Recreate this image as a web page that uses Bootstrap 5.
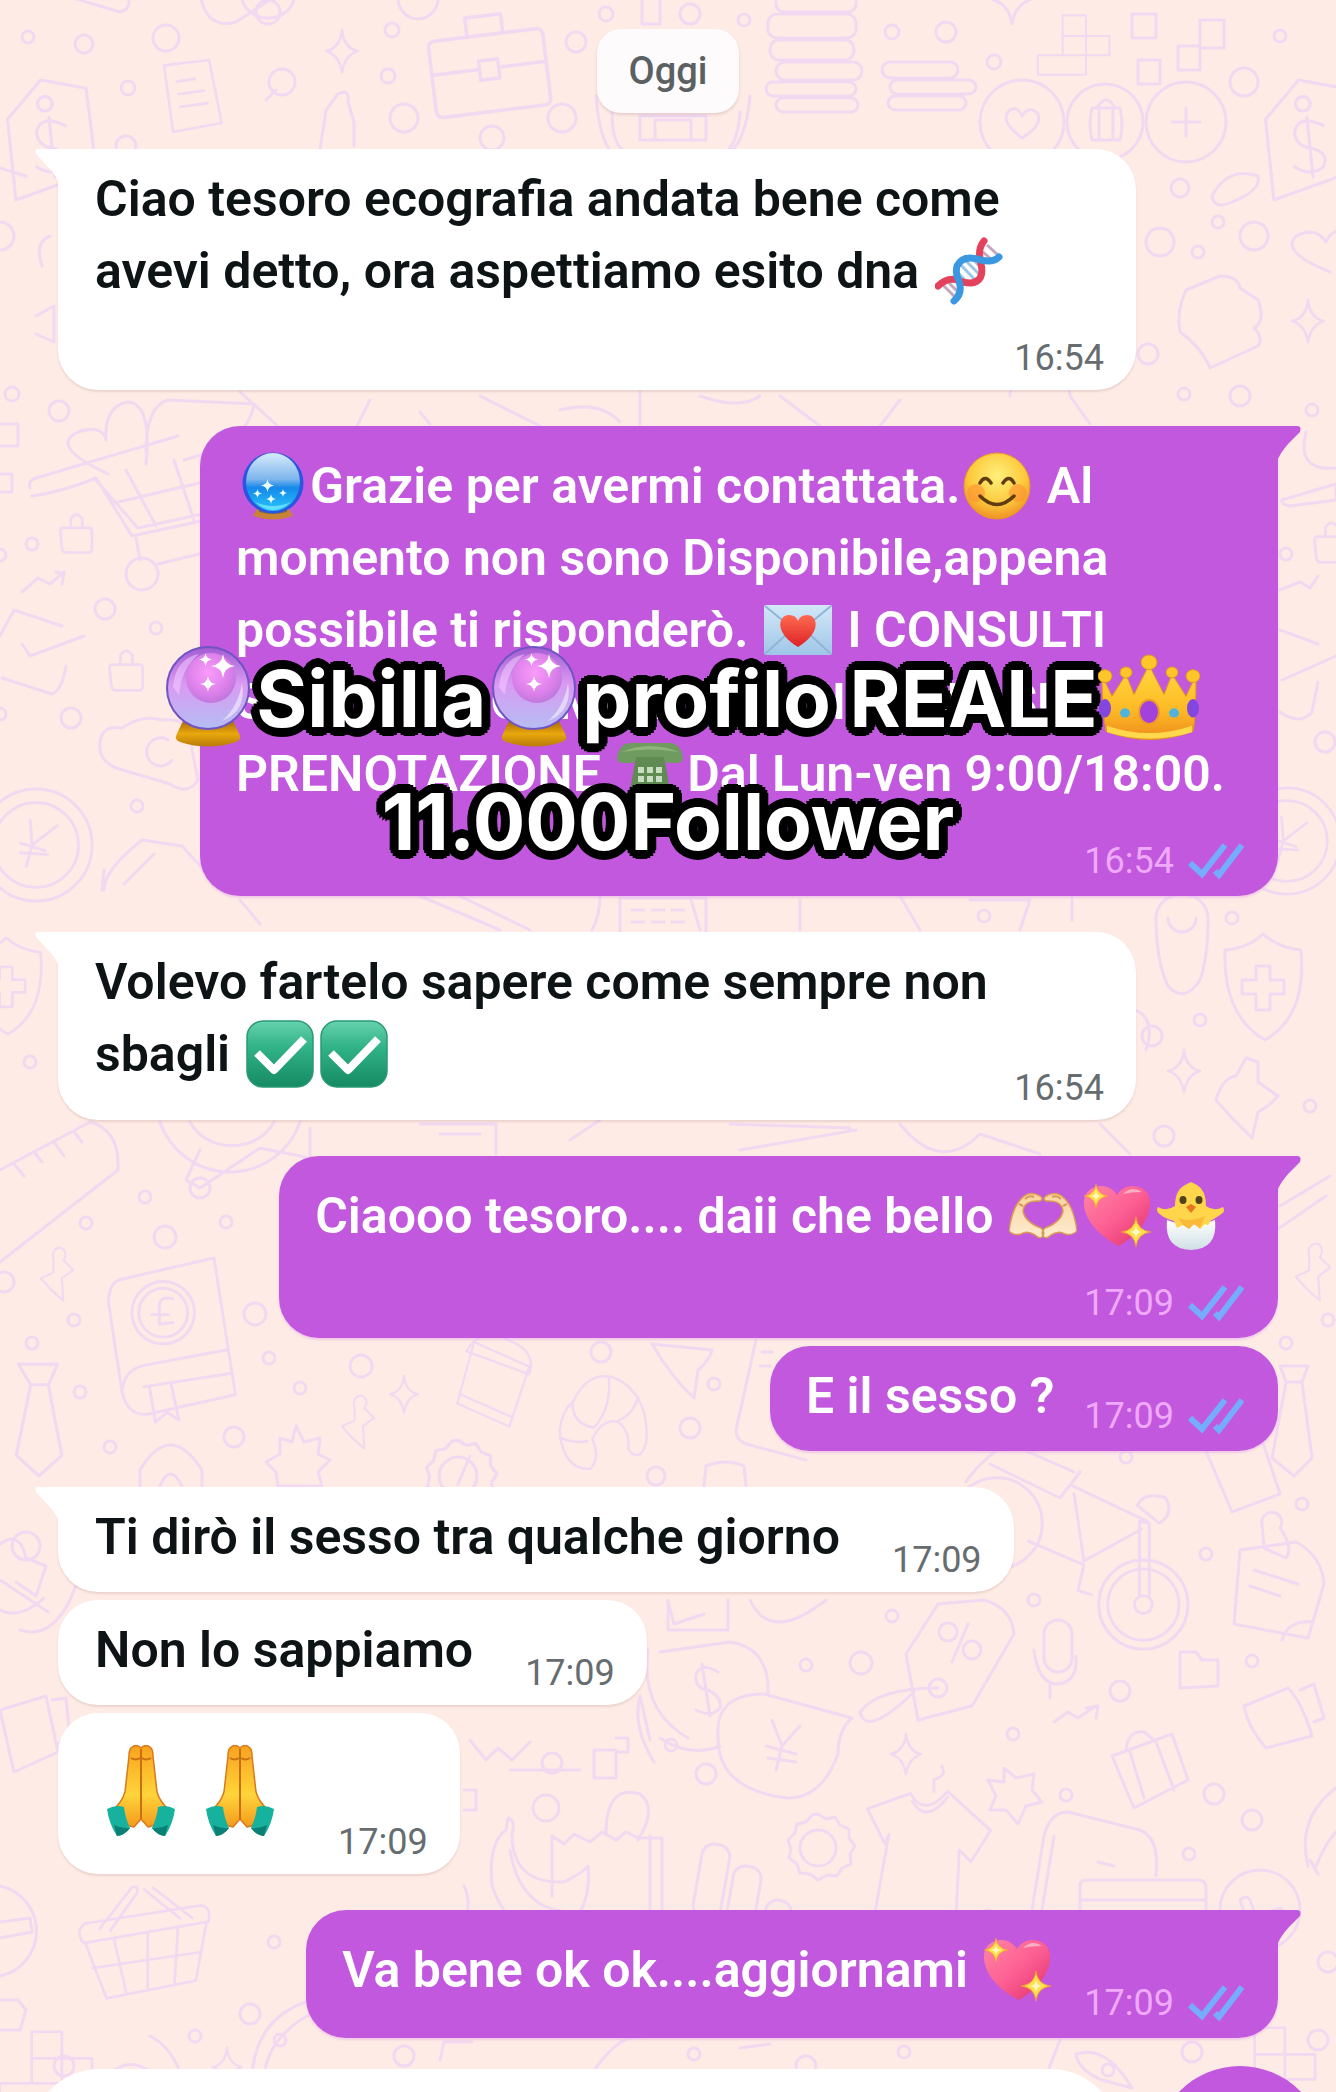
<!DOCTYPE html>
<html lang="it">
<head>
<meta charset="utf-8">
<meta name="viewport" content="width=device-width, initial-scale=1">
<title>Chat</title>
<link href="https://cdn.jsdelivr.net/npm/bootstrap@5.3.0/dist/css/bootstrap.min.css" rel="stylesheet">
<style>
  body { font-family: Roboto, "Liberation Sans", sans-serif; background: #feebe5; }
  .chat-screen { height: 100vh; background: #feebe5; }
  .wallpaper { inset: 0; width: 100%; height: 100%; fill: none; stroke: #f2d9f1; stroke-width: 3; stroke-linejoin: round; stroke-linecap: round; }
  .chat-log { padding: 29px 58px 31px; }
  .day-pill { background: #fdfbfc; color: #5b6063; font-size: 38px; font-weight: 500; line-height: 44px; padding: 20px 32px; border-radius: 24px; margin-bottom: 36px; box-shadow: 0 2px 3px rgba(120,80,100,.18); }
  .msg-row { margin-bottom: 8px; }
  .msg-row.last-of-group { margin-bottom: 36px; }
  .bubble { border-radius: 40px; padding: 14px 32px 10px 37px; font-size: 50px; line-height: 72px; font-weight: 600; white-space: nowrap; }
  .bubble-in { background: #fff; color: #0e1316; box-shadow: 0 2px 2px rgba(140,90,90,.16); column-gap: 52px; }
  .bubble-out { background: #c158dd; color: #fff; box-shadow: 0 2px 2px rgba(230,170,240,.5); column-gap: 30px; padding: 14px 34px 13px 36px; }
  .bubble-wide { width: 1078px; max-width: 100%; column-gap: 0; }
  .bubble-tall { padding-top: 24px; }
  .bubble-stack { row-gap: 29px; }
  .msg-text { padding-bottom: 9px; }
  .bubble-out .msg-text { padding-bottom: 6px; }
  .bubble-stack .msg-text { padding-bottom: 0; }
  .single-line .msg-text { padding-bottom: 19px; }
  .two-lines .msg-text { padding-bottom: 20px; }
  .tailed-in { border-top-left-radius: 0; }
  .tailed-out { border-top-right-radius: 0; }
  .tail { top: 0; width: 24px; height: 36px; }
  .tailed-in .tail { right: 100%; margin-right: -1px; fill: #fff; }
  .tailed-out .tail { left: 100%; margin-left: -1px; fill: #c158dd; }
  .stamp { font-size: 36px; line-height: 44px; font-weight: 400; color: #666c6f; gap: 14px; }
  .bubble-out .stamp { color: #efa9fb; }
  .ticks { width: 56px; height: 36px; fill: none; stroke: #76adfb; stroke-width: 6; }
  .emo { width: 68px; height: 68px; margin: 0 3px; vertical-align: -17px; }
  .emo-big { width: 92px; height: 92px; margin-right: 7px; }
  .big-line { padding: 18px 0 27px; }
  .caption {
    top: 211px; left: 0; z-index: 2; font-family: Inter, "Liberation Sans", sans-serif; font-weight: 700; font-size: 78px; line-height: 123px; color: #fff; white-space: nowrap;
    text-shadow: 9px 0 #000, -9px 0 #000, 0 9px #000, 0 -9px #000, 6px 6px #000, -6px 6px #000, 6px -6px #000, -6px -6px #000, 8px 3px #000, -8px 3px #000, 8px -3px #000, -8px -3px #000, 3px 8px #000, -3px 8px #000, 3px -8px #000, -3px -8px #000, 4px 0 #000, -4px 0 #000, 0 4px #000, 0 -4px #000;
  }
  .cap-emo { width: 102px; height: 102px; vertical-align: -20px; }
  .cap-orb { width: 84px; margin: 0 6px; }
  .composer { padding: 0 11px 0 30px; gap: 35px; }
  .composer-field { height: 140px; border-radius: 80px; background: #fff; font-size: 50px; padding: 0 60px; }
  .mic-btn { width: 170px; height: 170px; background: #c158dd; margin-top: -3px; }
</style>
<script src="https://cdn.jsdelivr.net/npm/bootstrap@5.3.0/dist/js/bootstrap.bundle.min.js"></script>
</head>
<body>

<!-- shared emoji drawings -->
<svg width="0" height="0" class="position-absolute" aria-hidden="true">
  <defs>
    <linearGradient id="gBlue" x1="0" y1="0" x2="0" y2="1"><stop offset="0" stop-color="#d8ebfb"/><stop offset=".45" stop-color="#7db5ec"/><stop offset=".6" stop-color="#1688ea"/><stop offset="1" stop-color="#27c5fb"/></linearGradient>
    <linearGradient id="gGold" x1="0" y1="0" x2="0" y2="1"><stop offset="0" stop-color="#a86a08"/><stop offset=".5" stop-color="#e9a80c"/><stop offset="1" stop-color="#b87a08"/></linearGradient>
    <linearGradient id="gOrb" x1="0" y1="0" x2="0" y2="1"><stop offset="0" stop-color="#a35cd2"/><stop offset=".45" stop-color="#d99af2"/><stop offset="1" stop-color="#b5bdf3"/></linearGradient>
    <radialGradient id="gOrbIn" cx=".45" cy=".4" r=".6"><stop offset="0" stop-color="#fa9bfb"/><stop offset=".7" stop-color="#dc80ea"/><stop offset="1" stop-color="#c078dc"/></radialGradient>
    <radialGradient id="gFace" cx=".5" cy=".35" r=".65"><stop offset="0" stop-color="#fff07c"/><stop offset=".65" stop-color="#fcc93b"/><stop offset="1" stop-color="#f09226"/></radialGradient>
    <linearGradient id="gEnv" x1="0" y1="0" x2="0" y2="1"><stop offset="0" stop-color="#d3e8f7"/><stop offset="1" stop-color="#9fc6e8"/></linearGradient>
    <linearGradient id="gRed" x1="0" y1="0" x2="0" y2="1"><stop offset="0" stop-color="#ff6a50"/><stop offset="1" stop-color="#dc2326"/></linearGradient>
    <linearGradient id="gPink" x1="0" y1="0" x2="1" y2="1"><stop offset="0" stop-color="#ff86a6"/><stop offset=".5" stop-color="#fd5f93"/><stop offset="1" stop-color="#dd2f6c"/></linearGradient>
    <linearGradient id="gCheck" x1="0" y1="0" x2="0" y2="1"><stop offset="0" stop-color="#66d2ac"/><stop offset=".4" stop-color="#31b287"/><stop offset="1" stop-color="#158a63"/></linearGradient>
    <linearGradient id="gHand" x1="0" y1="0" x2="0" y2="1"><stop offset="0" stop-color="#f9a21f"/><stop offset=".6" stop-color="#ffd43a"/><stop offset="1" stop-color="#f39a1d"/></linearGradient>
    <linearGradient id="gCrown" x1="0" y1="0" x2="0" y2="1"><stop offset="0" stop-color="#ffd83e"/><stop offset=".6" stop-color="#fdba25"/><stop offset="1" stop-color="#ee8b1c"/></linearGradient>
    <linearGradient id="gSkin" x1="0" y1="0" x2="0" y2="1"><stop offset="0" stop-color="#f9d49f"/><stop offset="1" stop-color="#fdebd0"/></linearGradient>
    <linearGradient id="gEgg" x1="0" y1="0" x2="0" y2="1"><stop offset="0" stop-color="#fff"/><stop offset="1" stop-color="#cfdfe5"/></linearGradient>

    <symbol id="e-star" viewBox="0 0 20 20"><path d="M10 0Q11 9 20 10Q11 11 10 20Q9 11 0 10Q9 9 10 0Z"/></symbol>
    <symbol id="e-ball" viewBox="0 0 68 68">
      <path d="M18 57h32l4 7q-20 7-40 0Z" fill="#c98336"/><path d="M20 57h28v3q-14 4-28 0Z" fill="#7f6a3e"/>
      <circle cx="34" cy="31" r="30.500" fill="#2a55e0"/><ellipse cx="34" cy="30" rx="27" ry="29" fill="url(#gBlue)"/>
      <g fill="#e8ffff"><use href="#e-star" x="22" y="27" width="13" height="13"/><use href="#e-star" x="14" y="37" width="9" height="9"/><use href="#e-star" x="27" y="42" width="10" height="10"/><use href="#e-star" x="40" y="37" width="8" height="8"/></g>
      <path d="M16 50q18 16 36 0q-18 8-36 0Z" fill="#7df0ff" opacity=".7"/>
    </symbol>
    <symbol id="e-orb" viewBox="9 0 84 102">
      <path d="M26 76h50q4 8 7 15q1 4-4 6q-28 9-56 0q-5-2-4-6Q22 84 26 76Z" fill="url(#gGold)"/>
      <circle cx="51" cy="43" r="41" fill="url(#gOrb)" stroke="#7054c4" stroke-width="2"/>
      <circle cx="54" cy="33" r="25" fill="url(#gOrbIn)"/>
      <path d="M16 42Q18 14 42 9Q24 24 22 50Z" fill="#f5ccff" opacity=".55"/><path d="M85 38q5 28-20 38q16-14 20-38Z" fill="#fff" opacity=".5"/>
      <g fill="#fff"><use href="#e-star" x="54" y="9" width="24" height="24"/><use href="#e-star" x="42" y="8" width="13" height="13"/><use href="#e-star" x="43" y="31" width="16" height="16"/></g>
    </symbol>
    <symbol id="e-smile" viewBox="0 0 68 68">
      <circle cx="34" cy="34" r="33" fill="url(#gFace)" stroke="#e79a22"/><circle cx="13" cy="41" r="9" fill="#ff8b32" opacity=".55"/><circle cx="55" cy="41" r="9" fill="#ff8b32" opacity=".55"/>
      <g fill="none" stroke="#5f3c12" stroke-width="3.500" stroke-linecap="round"><path d="M17 31q5-9 11 0M40 31q6-9 11 0M17 44q17 17 34 0"/></g>
    </symbol>
    <symbol id="e-letter" viewBox="0 0 68 68">
      <rect y="9" width="68" height="50" rx="2" fill="url(#gEnv)"/><path d="M1 10l33 27L67 10M1 58l24-22M67 58L43 36" fill="none" stroke="#8fb6d8" stroke-width="2"/>
      <path d="M34 51C10 37 14 19 25 19q7 0 9 6q2-6 9-6c11 0 15 18-9 32Z" fill="url(#gRed)"/>
    </symbol>
    <symbol id="e-phone" viewBox="0 0 68 68">
      <path d="M20 16h28l8 46H12Z" fill="#5f8a52"/><path d="M1 18Q3 4 14 3h40q11 1 13 15q0 5-7 5h-7q-5 0-5-6H20q0 6-5 6H8q-7 0-7-5Z" fill="#6f9a60"/><path d="M5 12Q34 0 63 12Q34 7 5 12Z" fill="#8fb47c"/>
      <g fill="#c7dec0"><path d="M22 27h6v6h-6zM31 27h6v6h-6zM40 27h6v6h-6zM22 36h6v6h-6zM31 36h6v6h-6zM40 36h6v6h-6zM22 45h6v6h-6zM31 45h6v6h-6zM40 45h6v6h-6z"/></g>
    </symbol>
    <symbol id="e-hands" viewBox="0 0 68 68">
      <path d="M0 49Q3 26 12 17Q20 8 31 14q4 3 0 5Q15 18 14 29q2 11 18 17q5 4 1 9q-3 2-7-2q-8-5-14-1Q5 54 0 49ZM68 49Q65 26 56 17Q48 8 37 14q-4 3 0 5Q53 18 54 29q-2 11-18 17q-5 4-1 9q3 2 7-2q8-5 14-1q7 2 12-3Z" fill="url(#gSkin)" stroke="#d99a55" stroke-width="1.500"/>
      <path d="M16 17q4-4 9-2M52 17q-4-4-9-2M10 22l4 2M58 22l-4 2" stroke="#d99a55" stroke-width="2" fill="none"/>
    </symbol>
    <symbol id="e-heart" viewBox="0 0 68 68">
      <path d="M36 64C12 52 0 34 1 19C2 3 25-2 34 13C43-2 66 3 67 19C68 36 56 52 36 64Z" fill="url(#gPink)"/><path d="M40 12q9-9 19-2q-11 0-19 2Z" fill="#ffc0d0" opacity=".8"/>
      <g fill="#ffe04a" stroke="#f29a35" stroke-width=".6"><use href="#e-star" x="1" y="2" width="24" height="24"/><use href="#e-star" x="38" y="34" width="30" height="32"/></g>
      <g fill="#fff9c8"><use href="#e-star" x="8" y="9" width="10" height="10"/><use href="#e-star" x="47" y="44" width="12" height="12"/></g>
    </symbol>
    <symbol id="e-chick" viewBox="0 0 68 68">
      <path d="M10 38q24 9 48 0q3 29-24 30Q7 67 10 38Z" fill="url(#gEgg)"/>
      <path d="M34 0q4 2 6 3q9 5 9 21q8 6 17 1q3 5-3 8q-6 4-10 6q-1 6-5 3l-5 5l-6-5l-5 5l-6-4l-6 3l-3-7Q7 36 4 33q-6-4-3-8q8 5 17-1Q18 8 28 3Z" fill="#ffd64b"/>
      <path d="M21 36q12 5 27-2l-5 12l-6-4l-5 5l-6-4Z" fill="#f6a62b" opacity=".6"/>
      <ellipse cx="26" cy="18" rx="3.500" ry="4" fill="#51421d"/><ellipse cx="42" cy="18" rx="3.500" ry="4" fill="#51421d"/><path d="M29 25l5-3l5 3l-5 6Z" fill="#e97520"/>
    </symbol>
    <symbol id="e-check" viewBox="0 0 68 68">
      <rect x="1" y="1" width="66" height="66" rx="16" fill="url(#gCheck)" stroke="#299a75" stroke-width="1.500"/><path d="M11 33L28 50L58 19" fill="none" stroke="#fff" stroke-width="8" stroke-linejoin="round"/>
    </symbol>
    <symbol id="e-dna" viewBox="0 0 68 68">
      <g stroke-width="3"><path d="M52 8l11 10M48 15l10 9M8 48l12 12M14 46l8 8" stroke="#c7a7bd"/><path d="M24 26l20 21M30 23l16 16M21 34l14 14M38 22l9 10" stroke="#9cc6e8"/></g>
      <g fill="none" stroke-width="7" stroke-linecap="round"><path d="M49 4Q42 12 46 27Q50 44 36 46Q28 46 23 43Q12 40 3 49" stroke="#e4425c"/><path d="M64 20Q58 26 46 23Q28 17 22 29Q20 37 24 44Q28 56 19 64" stroke="#3a98e2"/></g>
    </symbol>
    <symbol id="e-pray" viewBox="0 0 92 92">
      <path d="M36 3q5-5 10 0q5-5 10 0q2 2 2 8l4 36q3 10 12 18q-8 15-21 17l-7-8l-7 8q-13-2-21-17q9-8 12-18l4-36q0-6 2-8Z" fill="url(#gHand)" stroke="#d9791a" stroke-width="1.500"/>
      <path d="M46 4v70M36 13q5 3 9 0M47 13q4 3 9 0" stroke="#c96f14" stroke-width="2" fill="none"/>
      <path d="M12 64q9-5 17-2q1 10 6 21q-5 7-13 8Q14 79 12 64ZM80 64q-9-5-17-2q-1 10-6 21q5 7 13 8q8-12 10-27Z" fill="#17b29d"/><path d="M19 80q8 4 16 3q-5 7-13 8ZM73 80q-8 4-16 3q5 7 13 8Z" fill="#0c7f74"/>
    </symbol>
    <symbol id="e-crown" viewBox="0 0 102 102"><g transform="translate(0 9) scale(1 .92)">
      <path d="M4 23L14 46L28 22L36 44L51 12L66 44L74 22L88 46L98 23Q98 70 95 84Q51 102 8 84Q4 60 4 23Z" fill="url(#gCrown)" stroke="#e29420"/>
      <path d="M9 78q42 16 85 0v7q-42 14-85 0Z" fill="#ffd84b"/>
      <g fill="#fcc62b" stroke="#de951d"><circle cx="7" cy="24" r="7"/><circle cx="28" cy="20" r="6"/><circle cx="51" cy="9" r="8"/><circle cx="74" cy="20" r="6"/><circle cx="95" cy="24" r="7"/></g>
      <ellipse cx="51" cy="63" rx="10" ry="13" fill="#a441dc" stroke="#ef9a28" stroke-width="2"/><ellipse cx="7" cy="59" rx="6" ry="10" fill="#8346df"/><ellipse cx="95" cy="59" rx="6" ry="10" fill="#8346df"/>
      <circle cx="27" cy="64" r="5" fill="#4fb3dc"/><circle cx="76" cy="64" r="5" fill="#4fb3dc"/></g>
    </symbol>

    <symbol id="tail-l" viewBox="0 0 24 36"><path d="M3 0H24V36Q22 26 11 16L1 5Q-1 0 3 0Z"/></symbol>
    <symbol id="tail-r" viewBox="0 0 24 36"><path d="M20 0H0V36Q2 28 12 17L23 6Q25 0 20 0Z"/></symbol>
    <symbol id="ticks" viewBox="0 0 56 36"><path d="M2 20L14 31L37 2M27 28L31 32L54 2"/></symbol>

    <!-- wallpaper doodles -->
    <symbol id="w-spark" viewBox="0 0 40 50" overflow="visible"><path d="M20 0Q22 20 38 24Q23 29 20 48Q17 29 2 24Q18 20 20 0Z"/></symbol>
    <symbol id="w-lock" viewBox="0 0 40 50" overflow="visible"><path d="M4 18h30q3 0 3 4v20q0 4-4 4H8q-4 0-5-4L1 22q0-4 3-4ZM13 18V8q6-10 13 0v10"/></symbol>
    <symbol id="w-bag" viewBox="0 0 100 90" overflow="visible"><path d="M8 24h84q6 0 6 6v52q0 6-6 6H8q-6 0-6-6V30q0-6 6-6ZM35 24V8h30v16M2 52h40M58 52h40M42 45h16v16H42Z"/></symbol>
    <symbol id="w-tag" viewBox="0 0 90 120" overflow="visible"><path d="M2 40L34 2L78 10L88 90L10 118ZM38 18a7 7 0 1 0 .1 0M58 46q-26-12-28 8q2 12 16 14q18 4 12 18q-12 10-28 0M42 38l6 58"/></symbol>
    <symbol id="w-doc" viewBox="0 0 70 80" overflow="visible"><path d="M4 6L54 0L68 70L14 80ZM18 24l20-3M20 38l28-4M22 52l30-4"/></symbol>
    <symbol id="w-shield" viewBox="0 0 80 110" overflow="visible"><path d="M40 2Q56 16 78 18Q84 84 42 108Q0 84 2 18Q26 16 40 2ZM33 34h14v14h14v14H47v16H33V62H19V48h14Z"/></symbol>
    <symbol id="w-coin" viewBox="0 0 120 120" overflow="visible"><circle cx="60" cy="60" r="58"/><circle cx="60" cy="60" r="44"/><path d="M54 34l2 26l26-20M56 60l-6 22M44 58l26 8M44 68l28 2"/></symbol>
    <symbol id="w-cart" viewBox="0 0 190 200" overflow="visible"><path d="M2 32Q0 24 8 22L150-20M4 40q30-4 64-18L104 80l120-26M66 22L110 72l110-24M98 14l30 56M146 4l20 60M90 46l120-28M108 82l4 22M130 108l90-22"/><circle cx="114" cy="118" r="16"/><path d="M80 18Q20-10 50-24q24-8 28 8Q76-50 100-54q24 2 18 62M118-4Q118-50 140-56l86 4q-6 40-70 56"/></symbol>
    <symbol id="w-book" viewBox="0 0 130 170" overflow="visible"><path d="M12 22L108 0L130 140L40 160Q20 162 14 138L0 46Q0 26 12 22ZM14 138Q14 116 36 110L122 94M36 132L126 118M42 132l6 36l12-10l12 8l-8-38"/><circle cx="56" cy="56" r="32"/><circle cx="56" cy="56" r="25"/><path d="M66 42q-14-4-14 8v18l14-2M44 58h18"/></symbol>
    <symbol id="w-tie" viewBox="0 0 44 110" overflow="visible"><path d="M2 2h38l-9 20H14ZM14 22L0 90l22 20l22-20L31 22"/></symbol>
    <symbol id="w-basket" viewBox="0 0 150 130" overflow="visible"><path d="M8 42L136 22q14 0 10 18L6 64Q-4 50 8 42ZM8 64l24 62l100-20l12-66M40 58l14 62M78 52v64M112 46l-4 64M16 92l122-18M24 48L60 2q8-4 6 6L36 50M74 4l40 32M84 2l44 34"/></symbol>
    <symbol id="w-shirt" viewBox="0 0 130 170" overflow="visible"><path d="M2 44L46 28Q60 54 84 26L128 66L108 98L96 86L92 168Q60 172 10 148L24 70L20 80ZM70 26V14q14-4 8-14M48 36q14 24 36-4"/></symbol>
    <symbol id="w-bike" viewBox="0 0 200 220" overflow="visible"><circle cx="170" cy="160" r="45"/><circle cx="170" cy="160" r="36"/><circle cx="22" cy="78" r="46"/><circle cx="170" cy="160" r="9"/><path d="M166 152V76l10 2v74M98 40l76 36M100 48l10 68L168 84M54 96l56 24M110 120l-6 26l14 4M164 60q6-14 28-8q10 16-6 26Z"/></symbol>
    <symbol id="w-croissant" viewBox="0 0 110 120" overflow="visible"><path d="M18 34Q40-10 76 8Q112 30 108 84q-8 26-22 8q2-24-14-34q-20-2-30 22q10 22-2 36Q6 118 2 70Q4 46 18 34Q16 60 44 66Q66 40 62 4M72 58q20-8 26-30M2 78q20 8 34 4"/></symbol>
    <symbol id="w-gear" viewBox="0 0 80 80" overflow="visible"><path d="M40 4l8 5l9-2l5 8l9 4v9l6 8l-5 8l1 10l-9 4l-5 8l-10-1l-9 5l-8-6l-10-1l-3-9l-8-6l2-9l-3-9l7-7l2-9l9-2l6-7Z"/><circle cx="40" cy="38" r="18"/></symbol>
    <symbol id="w-cross" viewBox="0 0 110 90" overflow="visible"><path d="M40 2h34v30h34v28H74v28H4V60h36ZM40 32h34v28H40Z"/></symbol>
    <symbol id="w-cup" viewBox="0 0 100 120" overflow="visible"><path d="M24 8L96 40L70 118L2 88ZM14 20Q34-14 70 6Q106 20 96 50ZM6 76l68 30"/></symbol>
    <symbol id="w-pin" viewBox="0 0 50 80" overflow="visible"><path d="M20 20q-4-16 10-18q12 6 4 18l14 14l-16 12l2 32L16 62L2 46l18-8Z"/></symbol>
  </defs>
</svg>

<main class="chat-screen position-relative overflow-hidden d-flex flex-column">
  <svg class="wallpaper position-absolute" viewBox="0 0 1336 2092" preserveAspectRatio="xMidYMin slice" aria-hidden="true">
    <use href="#w-tag" x="2" y="78" width="100" height="124"/><use href="#w-doc" x="156" y="60" width="72" height="72"/>
    <use href="#w-bag" x="428" y="6" width="120" height="108" transform="rotate(-7 488 60)"/>
    <path d="M200-6Q206 30 236 22l52-34M242-4a26 22 0 1 0 52 0M400-10a20 20 0 1 0 36 0M60-6L120 12Q134 8 126-8M266 100l10-10M320 150l6-40l12-16q12-6 10 8l6 20v24"/><circle cx="282" cy="82" r="13"/><circle cx="268" cy="12" r="12"/>
    <use href="#w-spark" x="322" y="30" width="40" height="44"/><use href="#w-spark" x="992" y="-24" width="40" height="50"/>
    <g><rect x="776" y="-14" width="80" height="26" rx="8"/><rect x="768" y="14" width="88" height="24" rx="9"/><rect x="770" y="40" width="84" height="20" rx="9"/><rect x="776" y="62" width="86" height="18" rx="9"/><rect x="766" y="82" width="90" height="14" rx="7"/><rect x="776" y="98" width="82" height="14" rx="7"/><rect x="882" y="62" width="76" height="16" rx="8"/><rect x="890" y="80" width="86" height="14" rx="7"/><rect x="888" y="96" width="78" height="14" rx="7"/></g>
    <path d="M596 96Q600 150 620 160M750 96q-4 44-20 56M612 112q0 34 14 40h100q12-10 14-40M640 116h66v24h-66ZM655 120h36v20h-36ZM642-10v34h18V-10"/>
    <circle cx="1022" cy="122" r="42"/><circle cx="1105" cy="122" r="38"/><circle cx="1186" cy="122" r="40"/><path d="M1022 138q-24-18-12-28q8-4 12 6q8-12 16-2q4 12-16 24M1092 108h28q4 18 0 32h-28q-4-16 0-32ZM1099 108v30M1113 108v30M1098 106q8-12 16 0M1186 108v28M1172 122h28"/>
    <use href="#w-cross" x="1026" y="14" width="94" height="62"/><rect x="1132" y="14" width="24" height="24"/><path d="M1200 20h24v28h-24v22h-22V46h22ZM1138 60h22v24h-22Z"/>
    <use href="#w-tag" x="1260" y="78" width="100" height="124"/><path d="M1258 176q-30-10-46 20q2 14 20 6q30-12 26-26"/>
    <path d="M1186 290l34-14q18 0 20 12l18 12q8 20-4 28q10 10 4 18l-48 22q-8-20-30-36q-4-20 6-42Z"/><use href="#w-spark" x="1288" y="300" width="40" height="44"/>
    <path d="M1330 272q-50-20-34-36q20-10 30 6q6-14 20-10M50 236q-16 6-8 30M0 168l26 8M36 316l18-10v36l-18-8"/>
    <use href="#w-cart" x="28" y="456" width="190" height="200"/><use href="#w-lock" x="58" y="512" width="38" height="44"/><use href="#w-lock" x="108" y="648" width="38" height="46"/>
    <path d="M0 424h18v22H0M0 474h12v18H0M22 592l16-14l12 6l14-12M56 572l8 2l-2 10M0 636l14-26l48 16M22 644l8 12l54-20M2 678l50 16q10-4 14-28M100 750q-2-26 22-22q20-14 40-8q30-4 30 30l6 30q-10 16-28 4l-54-16q-14-6-16-18M168 740a14 14 0 1 0 4 20M104 890q0-20 38-50l40 6l40 44M124 884l30-30M104 870l-2 20"/>
    <use href="#w-coin" x="-22" y="786" width="116" height="118"/>
    <path d="M240 392l40 36M370 400l-14 28M480 396l60 30M560 410q40-10 60 12M780 396l40 30M900 400l-20 26M1010 396a30 30 0 0 1 60 0l20 28M420 412l10 12M640 392v34M700 396q40 14 60 0"/>
    <path d="M1306 432q-10 40 30 36M1282 500l54-16v16l-46 6q-10-2-8-6M1280 590l20-8l10 6l8-12M1280 630l38 14M1282 680l54-24M1280 712q20 14 32 0l6-30"/><use href="#w-lock" x="1312" y="520" width="40" height="46"/>
    <use href="#w-coin" x="1232" y="786" width="110" height="110"/>
    <path d="M420 896l80 34M460 896l70 34M600 896q0 20-8 34M690 896l10 34M800 900v30M900 896l20 34M970 900h60l-10 30M1072 896v24M240 900l20 24"/><rect x="620" y="898" width="86" height="40"/><path d="M632 910h12M652 910h12M672 910h12M632 922h12M652 922h12M672 922h12"/>
    <use href="#w-shield" x="-34" y="936" width="80" height="100"/><use href="#w-shield" x="1218" y="932" width="90" height="110"/>
    <path d="M1156 918a26 24 0 1 1 52 0q0 40-8 62q-16 24-32 6Q1156 960 1156 918ZM1168 918a14 14 0 1 0 28 0M1136 1010q20 10 10 40"/>
    <use href="#w-spark" x="1166" y="1050" width="36" height="44"/><path d="M1216 1100q6-22 20-24l10-18l12 4v20l20 14q-8 10-20 16l-6 26l-20-20Z"/>
    <path d="M0 1170L90 1122Q120 1130 118 1170L0 1262M14 1164l10 12M34 1152l8 10M54 1142l10 14M74 1132l8 10M160 1122a74 74 0 0 0 140 0M190 1122a46 40 0 0 0 84 0M200 1150l-14 30l14 8l60-40l50 10v-30M420 1124h76v30M440 1134h40M570 1140l30-20M730 1124l120 4M740 1150l116-20M900 1124q40 50 80 10l60 20M1100 1124l30 30"/><circle cx="200" cy="1188" r="10"/>
    <use href="#w-pin" x="34" y="1246" width="46" height="56"/><use href="#w-book" x="102" y="1258" width="140" height="166"/><use href="#w-tie" x="16" y="1362" width="46" height="114"/>
    <use href="#w-cup" x="444" y="1336" width="100" height="92"/><use href="#w-croissant" x="548" y="1374" width="110" height="98"/><use href="#w-pin" x="334" y="1394" width="48" height="56"/><use href="#w-spark" x="386" y="1376" width="36" height="38"/>
    <path d="M652 1344l60 6q-2 10-14 20l-4 28q-22-20-42-54ZM756 1340l-20 90q0 10 10 14l60 16M762 1352h10M760 1366h10"/>
    <path d="M140 1486v-16q30-50 62 0v16M160 1486q10-24 22 0M296 1426l8 16l16-4l-2 16l12 6l-12 12l4 14h-44l-2-14l-10-10l14-8v-16l12 4ZM704 1486l2-20q20-8 38 0l2 20"/><use href="#w-gear" x="416" y="1436" width="84" height="84"/><path d="M470 1456l-12 28"/>
    <path d="M1262 1240l64-44M1280 1206l50-30M1280 1366h28l-6 16h-16ZM1286 1382l-14 76l22 18l18-18l-10-76M966 1482q8-14 40-40l68 30M1204 1446l54-18l22 66l-48 18Z"/><use href="#w-pin" x="1290" y="1242" width="46" height="60"/>
    <use href="#w-bike" x="974" y="1446" width="200" height="218"/>
    <path d="M990 1464l70 34l20-26M1240 1550l56-8q26 14 28 42l-16 54l-74-14ZM1254 1570l44 14M1250 1586l30 10M1282 1640q6-20 30-18M1262 1524a10 10 0 1 1 18 4q14 20 6 30l-22-10Z"/>
    <path d="M0 1544q20-14 26 14l20 8l-10 30l-20-14M0 1580l48 32M0 1610q20 10 44-12M20 1630q30 10 50-30l10-24M0 1710l46-14l12 56l-44 20ZM52 1700l14-2l4 40l-12 6"/><circle cx="26" cy="1546" r="14"/>
    <path d="M660 1652l70-10q40 6 38 52M660 1738q30 20 60 8M718 1738q-4-44 46-44l88 24q-14 12-14 36q-16 44-50 44q-70-8-70-60ZM772 1720l10 26l18-20M782 1746l-6 24M766 1746l30 8M768 1758l28 4M718 1672q-16-10-22 2q-2 14 12 16q14 6 12 18q-8 10-24 2M702 1664l8 52M668 1600v30h60v-30M750 1600q20 44 76 0M648 1650q-8 60 40 88"/>
    <path d="M938 1604l-32 50l12 66l54-14l42-72q-2-26-30-34ZM968 1624l-16 38M938 1688q-60 0-78 24q6 26 54-20"/><circle cx="948" cy="1632" r="9"/><circle cx="972" cy="1650" r="9"/><circle cx="938" cy="1688" r="9"/>
    <rect x="1044" y="1620" width="28" height="52" rx="14"/><path d="M1034 1650q4 34 24 34q20-2 18-28M1050 1684v14M1180 1652h16l6 8h16v26l-38 2ZM1054 1722l14-10l10 6l18-12M1086 1708l12-2l-2 12"/>
    <path d="M1112 1756l60-22l16 46l-54 28ZM1126 1750q2-20 18-18l10 8M1130 1752l14 46M1156 1742l18 48M1244 1706l44-18q14 14 24 48l-46 12q-18-20-22-42ZM1300 1690l14-6l10 34l-10 4"/>
    <use href="#w-spark" x="886" y="1734" width="40" height="42"/><path d="M1004 1768l12 10l18-4l-2 16l10 12l-16 4l-8 18l-12-14h-16l6-14l-8-16l16 2Z"/>
    <use href="#w-shirt" x="864" y="1766" width="130" height="166"/><use href="#w-gear" x="778" y="1810" width="80" height="80"/>
    <g><rect x="698" y="1844" width="28" height="74" rx="12" transform="rotate(10 712 1878)"/><rect x="730" y="1866" width="28" height="62" rx="12" transform="rotate(10 744 1896)"/><rect x="764" y="1900" width="26" height="44" rx="12" transform="rotate(10 776 1920)"/></g>
    <path d="M1032 1910l12-74q6-24 24-24l72 18q20 8 16 46M1042 1910l12-74M1098 1862l16 4M1080 1912v-26q0-6 6-6h112q8 0 8 8v24M1080 1900h126"/><circle cx="1260" cy="1910" r="40"/><path d="M1240 1900q6-6 10 0l6 16l24-8q8 4 4 12l-34 10Z"/><path d="M1336 1788q-40 30-28 78M1316 1866q10-24 20-34M1310 1860l8 14"/>
    <path d="M552 1836v60M552 1836l12 8l10-10l16 8l12-10l14 8l10-8l12 6h24v110M650 1836v110M606 1834q0-50 34-40q18 14-2 46M510 1770h70M470 1740l16 20l12-12l14 12l18-18M464 1790h12v20h-12M594 1750h22v28h-22ZM616 1738h12v14h-12M492 1886q-4-44 14-56l2-12q8 2 4 16q0 50 52 48q20-10 24-16q4 40-22 64q-50 20-74-44ZM510 1850q10 60 60 62M410 1920q10 30 50 10q14-24 4-44M430 1940l6-20M650 1740l-10-44q-8 30 14 66M668 1602l6 22l30-10"/>
    <path d="M0 1886a46 46 0 0 1 0 90M0 1922l30-4l2 14l-32 6M0 2000h18l8 10l-6 20H0"/>
    <use href="#w-basket" x="70" y="1886" width="150" height="116"/><use href="#w-spark" x="208" y="2048" width="38" height="40"/><use href="#w-cross" x="-10" y="2030" width="110" height="80"/>
    <path d="M252 2076q4-60 60-76M264 2076q4-40 50-64M150 2036q20 10 30 36M108 2076q20-22 46-2M440 2060l4-18h28M590 2076q30-44 50-38M740 2048l30-4M1060 2040l-14 36M1076 2054q30-10 56 34l-30-8q-24-10-26-26Z"/><circle cx="1108" cy="2070" r="6"/><use href="#w-cross" x="1218" y="2026" width="100" height="80"/>
    <g>
      <circle cx="84" cy="44" r="9"/><circle cx="166" cy="38" r="13"/><circle cx="28" cy="37" r="6"/><circle cx="392" cy="30" r="7"/><circle cx="388" cy="76" r="7"/><circle cx="404" cy="118" r="14"/><circle cx="562" cy="118" r="14"/><circle cx="576" cy="42" r="10"/><circle cx="606" cy="14" r="7"/><circle cx="690" cy="14" r="10"/><circle cx="744" cy="20" r="6"/><circle cx="892" cy="32" r="7"/><circle cx="946" cy="32" r="10"/><circle cx="1280" cy="36" r="6"/><circle cx="1244" cy="82" r="14"/><circle cx="994" cy="62" r="7"/><circle cx="128" cy="88" r="7"/><circle cx="126" cy="146" r="10"/><circle cx="492" cy="138" r="12"/><circle cx="1180" cy="188" r="9"/><circle cx="1160" cy="242" r="14"/><circle cx="1218" cy="222" r="6"/><circle cx="1254" cy="236" r="14"/><circle cx="1198" cy="252" r="6"/><circle cx="1148" cy="354" r="10"/><circle cx="1184" cy="394" r="6"/><circle cx="1240" cy="396" r="10"/><circle cx="1312" cy="410" r="6"/><circle cx="0" cy="236" r="14"/>
      <circle cx="12" cy="394" r="7"/><circle cx="59" cy="411" r="10"/><circle cx="32" cy="544" r="6"/><circle cx="105" cy="609" r="10"/><circle cx="156" cy="628" r="6"/><circle cx="0" cy="555" r="6"/><circle cx="71" cy="718" r="10"/><circle cx="0" cy="714" r="6"/><circle cx="137" cy="806" r="6"/><circle cx="1286" cy="554" r="6"/><circle cx="1325" cy="742" r="10"/>
      <circle cx="984" cy="916" r="6"/><circle cx="1232" cy="918" r="6"/><circle cx="1152" cy="1036" r="10"/><circle cx="1200" cy="1020" r="6"/><circle cx="1310" cy="1106" r="6"/><circle cx="1164" cy="1136" r="10"/><circle cx="30" cy="1062" r="6"/><circle cx="145" cy="1197" r="6"/><circle cx="86" cy="1223" r="6"/><circle cx="165" cy="1237" r="11"/><circle cx="226" cy="1222" r="6"/><circle cx="4" cy="1282" r="10"/><circle cx="74" cy="1320" r="6"/><circle cx="32" cy="1343" r="6"/><circle cx="255" cy="1314" r="11"/><circle cx="269" cy="1358" r="6"/><circle cx="80" cy="1392" r="6"/><circle cx="361" cy="1366" r="11"/><circle cx="300" cy="1388" r="6"/><circle cx="234" cy="1437" r="10"/><circle cx="110" cy="1447" r="6"/><circle cx="601" cy="1352" r="10"/><circle cx="714" cy="1384" r="6"/><circle cx="690" cy="1428" r="10"/><circle cx="656" cy="1476" r="9"/><circle cx="1286" cy="1343" r="6"/><circle cx="1328" cy="1320" r="6"/><circle cx="1126" cy="1457" r="6"/>
      <circle cx="1302" cy="1504" r="6"/><circle cx="1206" cy="1554" r="6"/><circle cx="1034" cy="1600" r="6"/><circle cx="892" cy="1616" r="6"/><circle cx="806" cy="1665" r="6"/><circle cx="861" cy="1663" r="11"/><circle cx="1120" cy="1691" r="10"/><circle cx="1252" cy="1661" r="6"/><circle cx="1013" cy="1734" r="6"/><circle cx="671" cy="1745" r="6"/><circle cx="706" cy="1774" r="10"/><circle cx="1066" cy="1795" r="6"/><circle cx="1214" cy="1794" r="10"/><circle cx="1252" cy="1820" r="10"/><circle cx="1189" cy="1854" r="6"/><circle cx="988" cy="1916" r="6"/><circle cx="552" cy="1763" r="10"/><circle cx="546" cy="1808" r="13"/><circle cx="274" cy="1942" r="6"/><circle cx="370" cy="1948" r="9"/><circle cx="250" cy="2014" r="10"/><circle cx="280" cy="2040" r="6"/><circle cx="64" cy="2066" r="10"/><circle cx="114" cy="2083" r="6"/><circle cx="195" cy="2036" r="6"/><circle cx="404" cy="2056" r="10"/><circle cx="694" cy="2054" r="6"/><circle cx="904" cy="2052" r="6"/><circle cx="1192" cy="2052" r="10"/><circle cx="1318" cy="2040" r="10"/><circle cx="1328" cy="1962" r="10"/><circle cx="806" cy="2066" r="10"/>
    </g>
  </svg>

  <section class="chat-log position-relative d-flex flex-column">
    <div class="day-pill align-self-center">Oggi</div>

    <div class="msg-row last-of-group d-flex justify-content-start">
      <article class="bubble bubble-in bubble-wide bubble-stack tailed-in position-relative d-flex flex-column">
        <svg class="tail position-absolute" aria-hidden="true"><use href="#tail-l"/></svg>
        <div class="msg-text">Ciao tesoro ecografia andata bene come<br>avevi detto, ora aspettiamo esito dna <svg class="emo" role="img" aria-label="DNA"><use href="#e-dna"/></svg></div>
        <div class="stamp align-self-end"><time>16:54</time></div>
      </article>
    </div>

    <div class="msg-row last-of-group d-flex justify-content-end position-relative">
      <article class="bubble bubble-out bubble-wide bubble-tall bubble-stack tailed-out position-relative d-flex flex-column">
        <svg class="tail position-absolute" aria-hidden="true"><use href="#tail-r"/></svg>
        <div class="msg-text"><svg class="emo" role="img" aria-label="Sfera di cristallo"><use href="#e-ball"/></svg>Grazie per avermi contattata.<svg class="emo" role="img" aria-label="Sorriso"><use href="#e-smile"/></svg> Al<br>momento non sono Disponibile,appena<br>possibile ti risponderò. <svg class="emo" role="img" aria-label="Lettera d'amore"><use href="#e-letter"/></svg> I CONSULTI<br>SONO A PAGAMENTO E INIZIANO SU<br>PRENOTAZIONE <svg class="emo" role="img" aria-label="Telefono"><use href="#e-phone"/></svg>Dal Lun-ven 9:00/18:00.</div>
        <div class="stamp align-self-end d-flex align-items-center"><time>16:54</time><svg class="ticks" role="img" aria-label="Letto"><use href="#ticks"/></svg></div>
      </article>
      <div class="caption position-absolute w-100 text-center">
        <div class="ps-4"><svg class="cap-emo cap-orb" role="img" aria-label="Sfera"><use href="#e-orb"/></svg>Sibilla<svg class="cap-emo cap-orb" role="img" aria-label="Sfera"><use href="#e-orb"/></svg>profilo REALE<svg class="cap-emo" role="img" aria-label="Corona"><use href="#e-crown"/></svg></div>
        <div>11.000Follower</div>
      </div>
    </div>

    <div class="msg-row last-of-group d-flex justify-content-start">
      <article class="bubble bubble-in bubble-wide two-lines tailed-in position-relative d-flex justify-content-between">
        <svg class="tail position-absolute" aria-hidden="true"><use href="#tail-l"/></svg>
        <div class="msg-text">Volevo fartelo sapere come sempre non<br>sbagli <svg class="emo" role="img" aria-label="Fatto"><use href="#e-check"/></svg><svg class="emo" role="img" aria-label="Fatto"><use href="#e-check"/></svg></div>
        <div class="stamp align-self-end"><time>16:54</time></div>
      </article>
    </div>

    <div class="msg-row d-flex justify-content-end">
      <article class="bubble bubble-out bubble-tall bubble-stack tailed-out position-relative d-flex flex-column">
        <svg class="tail position-absolute" aria-hidden="true"><use href="#tail-r"/></svg>
        <div class="msg-text pe-3">Ciaooo tesoro.... daii che bello <svg class="emo" role="img" aria-label="Mani a cuore"><use href="#e-hands"/></svg><svg class="emo" role="img" aria-label="Cuore scintillante"><use href="#e-heart"/></svg><svg class="emo" role="img" aria-label="Pulcino"><use href="#e-chick"/></svg></div>
        <div class="stamp align-self-end d-flex align-items-center"><time>17:09</time><svg class="ticks" role="img" aria-label="Letto"><use href="#ticks"/></svg></div>
      </article>
    </div>

    <div class="msg-row last-of-group d-flex justify-content-end">
      <article class="bubble bubble-out d-flex">
        <div class="msg-text">E il sesso ?</div>
        <div class="stamp align-self-end d-flex align-items-center"><time>17:09</time><svg class="ticks" role="img" aria-label="Letto"><use href="#ticks"/></svg></div>
      </article>
    </div>

    <div class="msg-row d-flex justify-content-start">
      <article class="bubble bubble-in tailed-in position-relative d-flex">
        <svg class="tail position-absolute" aria-hidden="true"><use href="#tail-l"/></svg>
        <div class="msg-text">Ti dirò il sesso tra qualche giorno</div>
        <div class="stamp align-self-end"><time>17:09</time></div>
      </article>
    </div>

    <div class="msg-row d-flex justify-content-start">
      <article class="bubble bubble-in d-flex">
        <div class="msg-text">Non lo sappiamo</div>
        <div class="stamp align-self-end"><time>17:09</time></div>
      </article>
    </div>

    <div class="msg-row last-of-group d-flex justify-content-start">
      <article class="bubble bubble-in d-flex">
        <div class="big-line d-flex"><svg class="emo-big" role="img" aria-label="Mani giunte"><use href="#e-pray"/></svg><svg class="emo-big me-0" role="img" aria-label="Mani giunte"><use href="#e-pray"/></svg></div>
        <div class="stamp align-self-end"><time>17:09</time></div>
      </article>
    </div>

    <div class="msg-row mb-0 d-flex justify-content-end">
      <article class="bubble bubble-out bubble-tall single-line tailed-out position-relative d-flex">
        <svg class="tail position-absolute" aria-hidden="true"><use href="#tail-r"/></svg>
        <div class="msg-text">Va bene ok ok....aggiornami <svg class="emo" role="img" aria-label="Cuore scintillante"><use href="#e-heart"/></svg></div>
        <div class="stamp align-self-end d-flex align-items-center"><time>17:09</time><svg class="ticks" role="img" aria-label="Letto"><use href="#ticks"/></svg></div>
      </article>
    </div>
  </section>

  <footer class="composer position-relative d-flex align-items-start">
    <input class="composer-field border-0 flex-grow-1" type="text" aria-label="Messaggio">
    <button class="mic-btn border-0 rounded-circle flex-shrink-0" type="button" aria-label="Messaggio vocale"></button>
  </footer>
</main>
</body>
</html>
